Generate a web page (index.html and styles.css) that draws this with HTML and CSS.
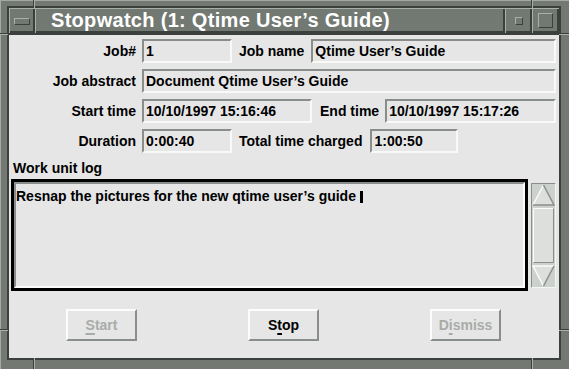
FILE: index.html
```html
<!DOCTYPE html>
<html>
<head>
<meta charset="utf-8">
<link rel="stylesheet" href="styles.css">
</head>
<body>
<div class="win">
  <span class="nv n-tl"></span><span class="nv n-tr"></span>
  <span class="nv n-bl"></span><span class="nv n-br"></span>
  <span class="nh n-lt"></span><span class="nh n-lb"></span>
  <span class="nh n-rt"></span><span class="nh n-rb"></span>
  <div class="inner">
    <div class="titlebar">
      <div class="tb-btn tb-menu"><span class="dash"></span></div>
      <div class="tb-title">Stopwatch (1: Qtime User’s Guide)</div>
      <div class="tb-btn tb-min"><span class="sq-small"></span></div>
      <div class="tb-btn tb-max"><span class="sq-big"></span></div>
    </div>
    <div class="client">
      <div class="row">
        <span class="lbl lead">Job#</span>
        <div class="field w90">1</div>
        <span class="lbl mid">Job name</span>
        <div class="field grow">Qtime User’s Guide</div>
      </div>
      <div class="row">
        <span class="lbl lead">Job abstract</span>
        <div class="field grow">Document Qtime User’s Guide</div>
      </div>
      <div class="row">
        <span class="lbl lead">Start time</span>
        <div class="field w170">10/10/1997 15:16:46</div>
        <span class="lbl mid3">End time</span>
        <div class="field grow">10/10/1997 15:17:26</div>
      </div>
      <div class="row">
        <span class="lbl lead">Duration</span>
        <div class="field w90">0:00:40</div>
        <span class="lbl mid4">Total time charged</span>
        <div class="field w88">1:00:50</div>
      </div>
      <div class="loglabel">Work unit log</div>
      <div class="logwrap">
        <div class="textarea">
          <div class="textin">Resnap the pictures for the new qtime user’s guide<span class="cursor"></span></div>
        </div>
        <svg class="scroll" width="25" height="105" viewBox="0 0 25 105">
          <rect x="0" y="0" width="25" height="105" fill="#cdd1cd"/>
          <path d="M0.5 104.5 V0.5 H24.5" fill="none" stroke="#8a8e8a"/>
          <path d="M0.5 104.5 H24.5 V0.5" fill="none" stroke="#f4f6f4"/>
          <polygon points="12.5,2 23,22 2,22" fill="#dcdfdc"/>
          <path d="M2 22 L12.5 2" stroke="#fafcfa" stroke-width="1.5" fill="none"/>
          <path d="M12.5 2 L23 22 H2" stroke="#8a8e8a" stroke-width="1.5" fill="none"/>
          <rect x="2" y="25" width="21" height="55" fill="#dcdfdc"/>
          <path d="M2.5 79.5 V25.5 H22.5" stroke="#fafcfa" fill="none"/>
          <path d="M2.5 79.5 H22.5 V25.5" stroke="#8a8e8a" fill="none"/>
          <polygon points="2,83 23,83 12.5,103" fill="#dcdfdc"/>
          <path d="M12.5 103 L2 83 H23" stroke="#fafcfa" stroke-width="1.5" fill="none"/>
          <path d="M23 83 L12.5 103" stroke="#8a8e8a" stroke-width="1.5" fill="none"/>
        </svg>
      </div>
      <div class="buttons">
        <div class="btn disabled"><u>S</u>tart</div>
        <div class="btn">S<u>t</u>op</div>
        <div class="btn disabled">D<u>i</u>smiss</div>
      </div>
    </div>
  </div>
</div>
</body>
</html>
```
FILE: styles.css
```css
* { box-sizing: border-box; }
html, body { margin: 0; padding: 0; }
body {
  width: 569px;
  height: 369px;
  overflow: hidden;
  font-family: "Liberation Sans", Arial, sans-serif;
  font-weight: bold;
  font-size: 14px;
  color: #000;
  background: #737873;
}
.win {
  position: relative;
  width: 569px;
  height: 369px;
  background: #737873;
  border-top: 1px solid #a3a9a3;
  border-left: 1px solid #a3a9a3;
  padding: 5px 8px 9px 6px;
}
.nv, .nh { position: absolute; }
.nv { width: 2px; height: 8px; border-left: 1px solid #3c403c; border-right: 1px solid #a9afa9; }
.nh { height: 2px; width: 8px; border-top: 1px solid #3c403c; border-bottom: 1px solid #a9afa9; }
.n-tl { left: 32px; top: -1px; }
.n-tr { left: 530px; top: -1px; }
.n-bl { left: 32px; top: 357px; height: 11px; }
.n-br { left: 530px; top: 357px; height: 11px; }
.n-lt { left: -1px; top: 32px; }
.n-lb { left: -1px; top: 328px; }
.n-rt { left: 558px; top: 32px; width: 10px; }
.n-rb { left: 558px; top: 328px; width: 10px; }

.inner {
  height: 100%;
  border: 2px solid #3c403c;
  display: flex;
  flex-direction: column;
}
.titlebar {
  height: 27px;
  display: flex;
  background: #727872;
  border-bottom: 2px solid #3c403c;
}
.tb-btn, .tb-title {
  box-shadow: inset 1px 1px 0 #a9afa9, inset -2px -2px 0 #3c403c;
  display: flex;
  align-items: center;
  justify-content: center;
}
.tb-menu { width: 26px; }
.tb-min { width: 27px; }
.tb-max { width: 27px; }
.tb-title {
  flex: 1;
  justify-content: flex-start;
  padding-left: 16px;
  color: #fff;
  font-size: 20px;
  line-height: 25px;
  letter-spacing: 0.3px;
  white-space: nowrap;
}
.dash {
  width: 16px;
  height: 7px;
  margin-top: 2px;
  border: 1px solid;
  border-color: #a9afa9 #3c403c #3c403c #a9afa9;
}
.sq-small {
  width: 8px;
  height: 8px;
  margin-top: 1px;
  border: 1px solid;
  border-color: #a9afa9 #3c403c #3c403c #a9afa9;
}
.sq-big {
  width: 15px;
  height: 15px;
  border: 1px solid;
  border-color: #a9afa9 #3c403c #3c403c #a9afa9;
}

.client {
  flex: 1;
  background: #e6e6e6;
  padding-top: 4px;
  display: flex;
  flex-direction: column;
}
.row {
  display: flex;
  align-items: center;
  height: 24px;
  margin-bottom: 6px;
}
.lbl { white-space: nowrap; line-height: 16px; }
.lead { width: 127px; text-align: right; margin-right: 6px; flex: none; }
.mid { margin: 0 7px 0 7px; }
.mid3 { margin: 0 6px 0 8px; }
.mid4 { margin: 0 8px 0 7px; }
.field {
  height: 24px;
  border: 2px solid;
  border-color: #8a8e8a #f8faf8 #f8faf8 #8a8e8a;
  padding: 0 2px;
  line-height: 20px;
  white-space: nowrap;
  flex: none;
}
.w90 { width: 90px; }
.w88 { width: 88px; }
.w170 { width: 170px; }
.grow { flex: 1; margin-right: 3px; }

.loglabel {
  margin-top: 1px;
  padding-left: 4px;
  line-height: 16px;
}
.logwrap {
  display: flex;
  align-items: flex-start;
  margin-top: 3px;
}
.textarea {
  margin-left: 2px;
  width: 517px;
  height: 112px;
  border: 3px solid #000;
}
.textin {
  height: 100%;
  border: 2px solid;
  border-color: #8a8e8a #fafcfa #fafcfa #8a8e8a;
  padding-top: 4px;
  line-height: 16px;
  white-space: nowrap;
}
.cursor {
  display: inline-block;
  width: 3px;
  height: 12px;
  margin-left: 4px;
  background: #000;
  vertical-align: -2px;
}
.scroll {
  margin-left: 3px;
  margin-top: 4px;
  flex: none;
  display: block;
}
.buttons {
  display: flex;
  gap: 111px;
  padding-left: 57px;
  margin-top: 18px;
}
.btn {
  width: 71px;
  height: 32px;
  border: 2px solid;
  border-color: #fbfdfb #8a8e8a #8a8e8a #fbfdfb;
  text-align: center;
  line-height: 28px;
}
.btn u {
  text-decoration-thickness: 2px;
  text-underline-offset: 3px;
}
.disabled { color: #a8aca8; }
```
